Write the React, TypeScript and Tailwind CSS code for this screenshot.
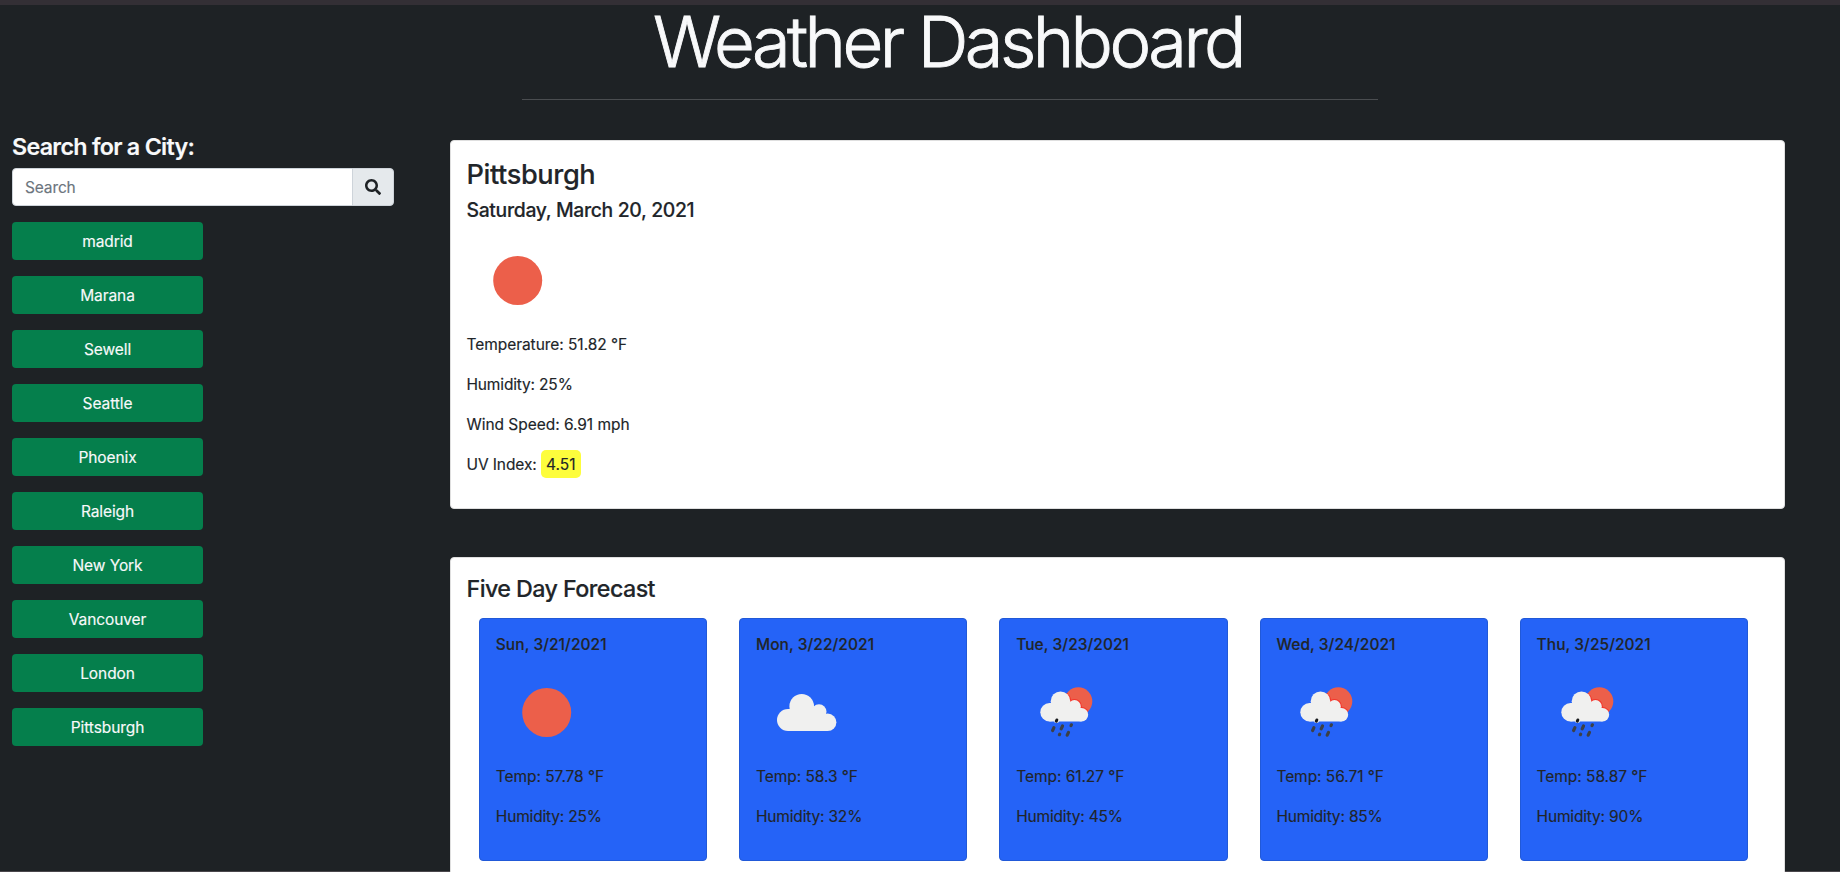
import { FaSearch } from "react-icons/fa";

const cities = [
  "madrid",
  "Marana",
  "Sewell",
  "Seattle",
  "Phoenix",
  "Raleigh",
  "New York",
  "Vancouver",
  "London",
  "Pittsburgh",
];

type Kind = "sun" | "cloud" | "rain";

const forecast: { date: string; kind: Kind; temp: string; humidity: string }[] = [
  { date: "Sun, 3/21/2021", kind: "sun", temp: "57.78", humidity: "25" },
  { date: "Mon, 3/22/2021", kind: "cloud", temp: "58.3", humidity: "32" },
  { date: "Tue, 3/23/2021", kind: "rain", temp: "61.27", humidity: "45" },
  { date: "Wed, 3/24/2021", kind: "rain", temp: "56.71", humidity: "85" },
  { date: "Thu, 3/25/2021", kind: "rain", temp: "58.87", humidity: "90" },
];

function WeatherIcon({ kind }: { kind: Kind }) {
  return (
    <svg width="100" height="100" viewBox="0 0 100 100" className="mb-[3px] block">
      {kind === "sun" && <circle cx="50.7" cy="50.5" r="24.5" fill="#ec5f4a" />}
      {kind === "cloud" && (
        <g fill="#f0f0ef">
          <circle cx="32" cy="58" r="11" />
          <circle cx="45.7" cy="44.3" r="12.3" />
          <circle cx="63" cy="49.7" r="7.5" />
          <circle cx="71.7" cy="60.3" r="8.7" />
          <path d="M32 47h14l17 3 8.7 4v15H32z" />
        </g>
      )}
      {kind === "rain" && (
        <>
          <defs>
            <clipPath id="sun-disc">
              <circle cx="62.3" cy="39.3" r="14" />
            </clipPath>
          </defs>
          <circle cx="62.3" cy="39.3" r="14" fill="#ec5f4a" />
          <g clipPath="url(#sun-disc)" fill="#f5352a">
            <circle cx="44.5" cy="39.3" r="10.7" />
            <circle cx="58.5" cy="44.2" r="7.3" />
            <circle cx="65.5" cy="52.7" r="7.6" />
          </g>
          <g fill="#f0f0ef">
            <circle cx="33.5" cy="50.2" r="9.2" />
            <circle cx="44.5" cy="39.3" r="9.8" />
            <circle cx="58.5" cy="44.4" r="6.3" />
            <circle cx="65.5" cy="52.8" r="6.7" />
            <path d="M33.5 41h11l14 3 7 2.2v13.2h-32z" />
          </g>
          <circle cx="40.5" cy="58.5" r="2.5" fill="#f0f0ef" />
          <path
            d="M40.3 59.2l.5-1.2"
            stroke="#17191b"
            strokeWidth="3"
            strokeLinecap="round"
          />
          <g stroke="#3c4046" strokeWidth="3.2" strokeLinecap="round">
            <path d="M36.6 68.5l1.3-2.8" />
            <path d="M45.2 66.8l1.3-2.8" />
            <path d="M55 63.6l.4-.8" />
            <path d="M43.4 72.7l.3-.6" />
            <path d="M51.2 73.2l1.3-2.8" />
          </g>
        </>
      )}
    </svg>
  );
}

export default function App() {
  return (
    <div className="flex h-[872px] w-[1840px] flex-col overflow-hidden bg-[#1e2225] font-['Inter',sans-serif] text-[15.5px] leading-6 text-[#212529] [-webkit-text-stroke:0.15px]">
      <div className="h-[5px] shrink-0 bg-[#332f35]" />
      <header className="flex h-[127px] shrink-0 flex-col items-center pl-[60px]">
        <h1 className="pr-[4px] text-[70.5px] leading-[73px] font-light tracking-[-3.6px] whitespace-nowrap text-[#f8f9fa] [-webkit-text-stroke:0.9px]">
          Weather Dashboard
        </h1>
        <hr className="mt-[21px] w-[856px] border-[#4a4d50]" />
      </header>

      <main className="flex min-h-0 flex-1 items-start">
        <aside className="ml-3 w-[382px] shrink-0">
          <h3 className="mb-[7px] text-[23.3px] leading-[29px] font-[560] tracking-[-0.72px] text-[#f8f9fa]">
            Search for a City:
          </h3>
          <div className="mb-4 flex h-[38px]">
            <input
              type="text"
              placeholder="Search"
              className="min-w-0 flex-1 rounded-l border border-[#ced4da] bg-white px-3 pt-[2px] tracking-[-0.13px] placeholder:text-[#6c757d]"
            />
            <button
              aria-label="Search"
              className="-ml-px flex w-[42px] items-center justify-center rounded-r border border-[#ced4da] bg-[#e5e9ec] pr-[1px] text-[#1e2225]"
            >
              <FaSearch size={16} />
            </button>
          </div>
          <div className="flex flex-col gap-4">
            {cities.map((city) => (
              <button
                key={city}
                className="h-[38px] w-[191px] rounded bg-[#057f4c] pt-[2px] tracking-[-0.09px] text-[#f8f9fa]"
              >
                {city}
              </button>
            ))}
          </div>
        </aside>

        <section className="relative z-10 ml-[56px] w-[1335px] shrink-0 pt-2">
          <article className="mb-[48px] rounded border border-[#dfdfdf] bg-white pt-[17px] pr-4 pb-[15px] pl-[15.5px]">
            <h2 className="mb-[6px] text-[27.2px] leading-[34px] font-[540] tracking-[-0.4px]">
              Pittsburgh
            </h2>
            <h4 className="mb-2 text-[19.4px] leading-6 font-[540] tracking-[-0.34px]">
              Saturday, March 20, 2021
            </h4>
            <WeatherIcon kind="sun" />
            <p className="mb-4 tracking-[-0.05px]">Temperature: 51.82 °F</p>
            <p className="mb-4 tracking-[-0.16px]">Humidity: 25%</p>
            <p className="mb-4 tracking-[-0.04px]">Wind Speed: 6.91 mph</p>
            <p className="mb-4 tracking-[-0.1px]">
              UV Index:{" "}
              <span className="rounded-[5px] bg-[#fdfd3c] px-[5px] pt-[5px] pb-1 tracking-[0.1px]">
                4.51
              </span>
            </p>
          </article>

          <article className="rounded border border-[#dfdfdf] bg-white py-4 pr-4 pl-[15.5px]">
            <h3 className="mb-[15px] text-[23.3px] leading-[29px] font-[540] tracking-[-0.58px]">
              Five Day Forecast
            </h3>
            <div className="ml-[12.5px] grid w-[1269px] grid-cols-5 gap-8">
              {forecast.map((day) => (
                <div
                  key={day.date}
                  className="rounded border border-[#2159d8] bg-[#2563f7] pt-4 pr-4 pb-[15px] pl-[15.8px]"
                >
                  <h5 className="mb-2 leading-[19px] font-[540] tracking-[0.06px]">
                    {day.date}
                  </h5>
                  <WeatherIcon kind={day.kind} />
                  <p className="mb-4 tracking-[-0.05px]">Temp: {day.temp} °F</p>
                  <p className="mb-4 tracking-[-0.17px]">Humidity: {day.humidity}%</p>
                </div>
              ))}
            </div>
          </article>
        </section>
      </main>
      <div className="h-px shrink-0 bg-[#4a474b]" />
    </div>
  );
}
